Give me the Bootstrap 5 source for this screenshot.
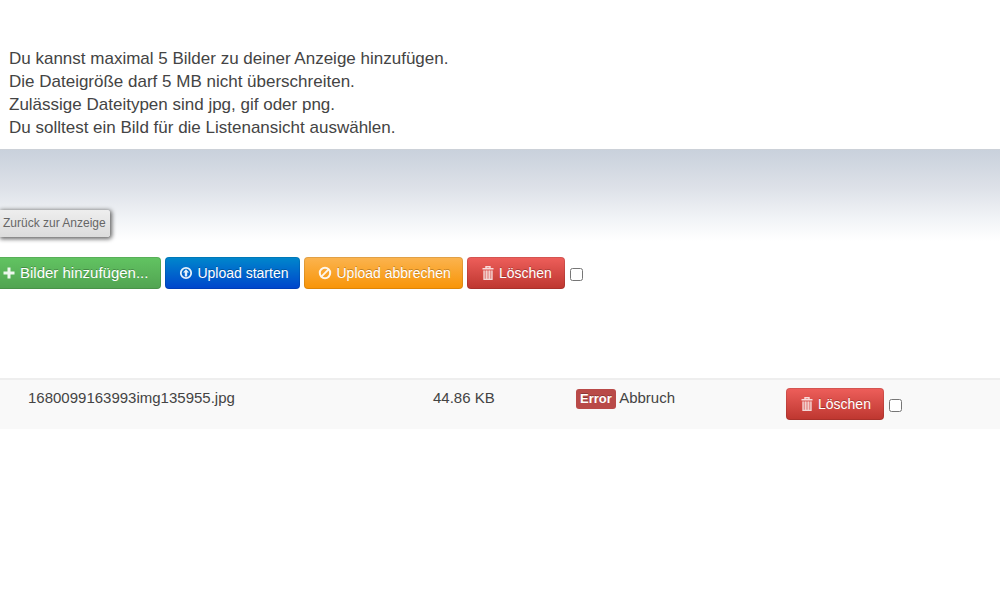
<!DOCTYPE html>
<html lang="de">
<head>
<meta charset="utf-8">
<meta name="viewport" content="width=device-width, initial-scale=1">
<title>Bilder hinzufügen</title>
<link href="https://cdn.jsdelivr.net/npm/bootstrap@5.3.0/dist/css/bootstrap.min.css" rel="stylesheet">
<style>
  body { font-family: "Liberation Sans", Arial, sans-serif; font-size: 15px; line-height: 20px; color: #444; background: #fff; }
  .intro { padding: 47px 9px 10px; font-size: 17px; line-height: 23px; }
  .intro p { margin: 0; }
  .band { height: 108px; padding-top: 60px; border-top: 1px solid #ccd1d8; background: linear-gradient(#c9d1dc, #dde1e8 35%, #f2f4f7 65%, #fff 85%); }
  .btn-back { height: 27px; padding: 0 4px 0 3px; border: 0; border-radius: 0 3px 3px 0; background: linear-gradient(#eee, #dcdcdc); color: #666; font-size: 12px; line-height: 27px; box-shadow: 1px 1px 4px 1px #666; }
  .btn-tool { display: inline-flex; align-items: center; gap: 4px; height: 32px; padding: 0 11px 0 13px; color: #fff; font-size: 14px; line-height: 20px; border: 1px solid rgba(0,0,0,.1); border-radius: 4px; background-origin: border-box; text-shadow: 0 -1px 0 rgba(0,0,0,.25); white-space: nowrap; }
  .btn-tool:hover { color: #fff; }
  .btn-tool svg { width: 14px; height: 14px; flex: none; }
  .tool-add { padding: 0 12px 0 2px; border-left: 0; border-radius: 0 4px 4px 0; font-size: 15px; background-image: linear-gradient(#62c462, #51a351); }
  .tool-start { background-image: linear-gradient(#0088cc, #0044cc); }
  .tool-cancel { background-image: linear-gradient(#fbb450, #f89406); }
  .tool-delete { padding-right: 12px; background-image: linear-gradient(#ee5f5b, #bd362f); }
  .btn-tool svg { opacity: .9; }
  .tool-delete svg { opacity: .8; }
  .tick { width: 13px; height: 13px; margin: 3px 0 0 1px; }
  .files { margin-top: 89px; table-layout: fixed; width: 100%; }
  .files td { height: 50px; padding: 8px 0 0; vertical-align: top; background: #f9f9f9; border-top: 2px solid #eee; }
  .files .name { width: 43.3%; padding-left: 28px; }
  .files .size { width: 14.3%; }
  .files .state { width: 21%; }
  .tag-error { padding: 3px 4px; border-radius: 3px; background: #b94a48; font-size: 13px; line-height: 14px; text-shadow: 0 -1px 0 rgba(0,0,0,.25); vertical-align: middle; }
</style>
</head>
<body>
<svg class="d-none" aria-hidden="true">
  <symbol id="i-plus" viewBox="0 0 14 14"><path d="M5.5 1.5h3v4h4v3h-4v4h-3v-4h-4v-3h4z" fill="currentColor"/></symbol>
  <symbol id="i-up" viewBox="0 0 14 14"><circle cx="7" cy="7" r="5.2" fill="none" stroke="currentColor" stroke-width="1.8"/><path d="M7 3.2 10 6.6H8.2v4H5.8v-4H4z" fill="currentColor"/></symbol>
  <symbol id="i-ban" viewBox="0 0 14 14"><g fill="none" stroke="currentColor" stroke-width="2"><circle cx="7" cy="7" r="5.2"/><path d="M3.4 10.6l7.2-7.2"/></g></symbol>
  <symbol id="i-trash" viewBox="0 0 14 14"><path d="M5 2V.8h4V2M1.5 2.8h11" fill="none" stroke="currentColor" stroke-width="1.4"/><path d="M2.5 4.5h9V14h-9z" fill="currentColor" opacity=".5"/><path d="M3 4.5V14M5.7 4.5V13M8.3 4.5V13M11 4.5V14M2.5 13.4h9" fill="none" stroke="currentColor" stroke-width="1.1"/></symbol>
</svg>

<section class="intro">
  <p>Du kannst maximal 5 Bilder zu deiner Anzeige hinzufügen.</p>
  <p>Die Dateigröße darf 5 MB nicht überschreiten.</p>
  <p>Zulässige Dateitypen sind jpg, gif oder png.</p>
  <p>Du solltest ein Bild für die Listenansicht auswählen.</p>
</section>

<div class="band">
  <button type="button" class="btn btn-back d-block">Zurück zur Anzeige</button>
</div>

<form>
  <div class="d-flex flex-wrap align-items-center gap-1">
    <button type="button" class="btn btn-tool tool-add"><svg aria-hidden="true"><use href="#i-plus"/></svg>Bilder hinzufügen...</button>
    <button type="button" class="btn btn-tool tool-start"><svg aria-hidden="true"><use href="#i-up"/></svg>Upload starten</button>
    <button type="button" class="btn btn-tool tool-cancel"><svg aria-hidden="true"><use href="#i-ban"/></svg>Upload abbrechen</button>
    <button type="button" class="btn btn-tool tool-delete"><svg aria-hidden="true"><use href="#i-trash"/></svg>Löschen</button>
    <input type="checkbox" class="tick" aria-label="Alle auswählen">
  </div>

  <table class="files">
    <tbody>
      <tr>
        <td class="name">1680099163993img135955.jpg</td>
        <td class="size">44.86 KB</td>
        <td class="state"><span class="badge tag-error">Error</span> Abbruch</td>
        <td>
          <div class="d-flex align-items-center gap-1">
            <button type="button" class="btn btn-tool tool-delete"><svg aria-hidden="true"><use href="#i-trash"/></svg>Löschen</button>
            <input type="checkbox" class="tick" aria-label="Bild auswählen">
          </div>
        </td>
      </tr>
    </tbody>
  </table>
</form>
<script src="https://cdn.jsdelivr.net/npm/bootstrap@5.3.0/dist/js/bootstrap.bundle.min.js"></script>
</body>
</html>
